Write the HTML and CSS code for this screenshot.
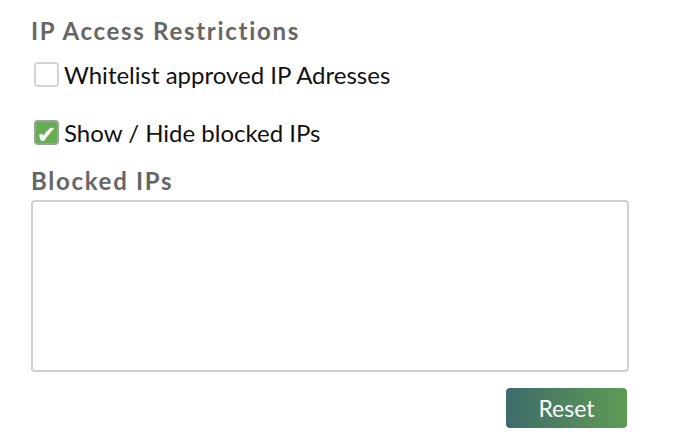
FILE: index.html
```html
<!DOCTYPE html>
<html>
<head>
<meta charset="utf-8">
<link rel="stylesheet" href="styles.css">
</head>
<body>
<div class="panel">
  <h2 class="heading">IP Access Restrictions</h2>
  <label class="check-row first">
    <span class="box"></span>
    <span class="label-text">Whitelist approved IP Adresses</span>
  </label>
  <label class="check-row second">
    <span class="box checked"><span class="tick">✔</span></span>
    <span class="label-text">Show / Hide blocked IPs</span>
  </label>
  <h2 class="heading sub">Blocked IPs</h2>
  <div class="textarea"></div>
  <div class="actions">
    <button class="reset">Reset</button>
  </div>
</div>
</body>
</html>
```
FILE: styles.css
```css
html, body {
  margin: 0;
  padding: 0;
  background: #fff;
}
body {
  font-family: Lato, "Liberation Sans", sans-serif;
}
.panel {
  padding: 14px 0 0 31px;
  width: 598px;
}
.heading {
  margin: 0;
  font-size: 24px;
  font-weight: 700;
  color: #666;
  letter-spacing: 1.7px;
  line-height: 34px;
}
.check-row {
  display: flex;
  align-items: center;
  gap: 5px;
  margin-left: 3px;
  font-size: 24px;
  color: #111;
  line-height: 27px;
}
.check-row.first {
  margin-top: 13px;
}
.check-row.second {
  margin-top: 31px;
}
.box {
  width: 21px;
  height: 21px;
  border: 2px solid #d4d4d4;
  border-radius: 4px;
  background: #fff;
  display: flex;
  align-items: center;
  justify-content: center;
  flex: none;
}
.box.checked {
  background: #67ad55;
  border-color: #9aa59a;
}
.tick {
  color: #fff;
  font-size: 24px;
  line-height: 1;
  font-family: "DejaVu Sans", sans-serif;
  margin-top: 4px;
}
.heading.sub {
  margin-top: 18px;
}
.textarea {
  margin-top: 2px;
  height: 168px;
  border: 2px solid #cfcfcf;
  border-radius: 4px;
}
.actions {
  display: flex;
  justify-content: flex-end;
  margin-top: 16px;
  padding-right: 2px;
}
.reset {
  width: 121px;
  height: 40px;
  border: none;
  border-radius: 4px;
  background: linear-gradient(to right, #3d6c6a, #609b55);
  color: #fff;
  font-family: Lato, "Liberation Sans", sans-serif;
  font-size: 23px;
  padding: 0;
}
```
